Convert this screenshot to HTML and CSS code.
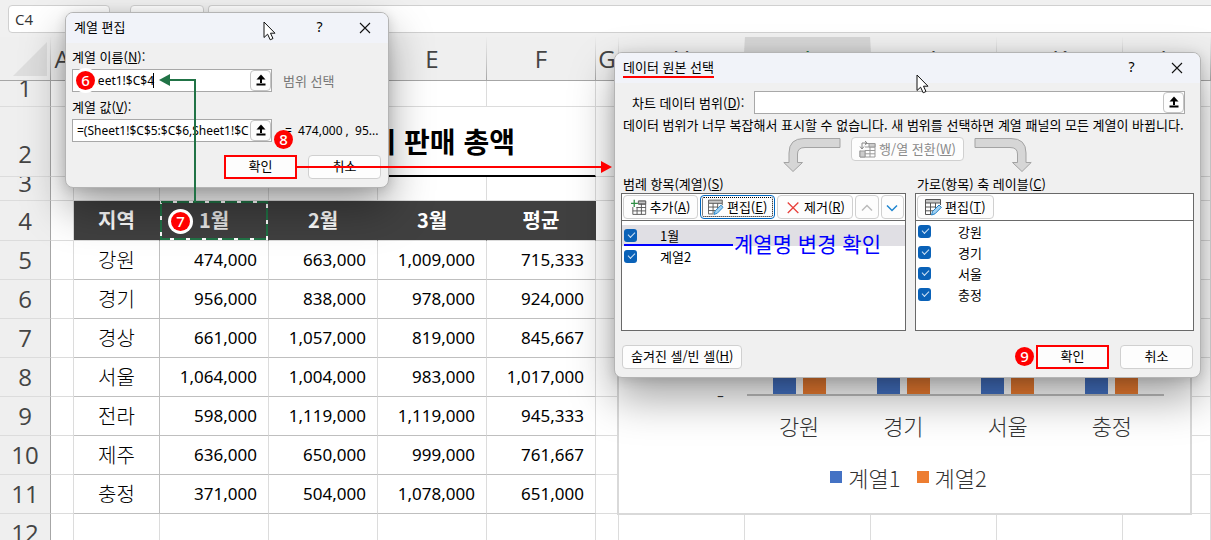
FILE: index.html
```html
<!DOCTYPE html>
<html lang="ko">
<head>
    <meta charset="UTF-8">
    <meta name="viewport" content="width=device-width, initial-scale=1.0">
    <title>데이터 원본 선택</title>
    <link rel="stylesheet" href="styles.css">
</head>
<body>
    <!-- Shared icons -->
    <svg class="defs" aria-hidden="true">
        <symbol id="i-up" viewBox="0 0 12 12">
            <path d="M6 0.5 L10.5 5.5 H1.5 Z" fill="#000"/>
            <path d="M6 3 V9 M1.5 10.5 H10.5" stroke="#000" stroke-width="2" fill="none"/>
        </symbol>
        <symbol id="i-close" viewBox="0 0 12 12">
            <path d="M1 1 L11 11 M11 1 L1 11" stroke="#111" stroke-width="1.1" fill="none"/>
        </symbol>
        <symbol id="i-cursor" viewBox="0 0 13 20">
            <path d="M1 1 V16.5 L4.6 13.2 L7.2 18.8 L10 17.5 L7.5 12.2 H12 Z" fill="#fff" stroke="#111" stroke-width="1"/>
        </symbol>
        <symbol id="i-add" viewBox="0 0 17 17">
            <path d="M8 1.5 H16 V16 H2 V8 M8 5 H16 M6 8.5 H16 M2 12.2 H16 M6.6 8 V16 M11.3 1.5 V16" stroke="#555" stroke-width="1" fill="none"/>
            <path d="M8 1.5 H16 V4.5 H8 Z" fill="#c4c4c4" stroke="#555"/>
            <path d="M3.5 0 V8 M0 4 H7.5" stroke="#2f8f46" stroke-width="1.4" fill="none"/>
        </symbol>
        <symbol id="i-edit" viewBox="0 0 17 17">
            <path d="M0.5 0.5 H15.5 V4 H0.5 Z" fill="#c4c4c4" stroke="#555"/>
            <path d="M0.5 4 V15.5 H6 M0.5 8 H11 M0.5 11.8 H8 M5.5 4 V15 M10.5 4 V9 M15.5 4 V6" stroke="#555" fill="none"/>
            <path d="M6.5 16 L7.6 12.4 L14 6 L16.4 8.3 L10 14.8 Z" fill="#9fd0f2" stroke="#1f7fc4"/>
        </symbol>
        <symbol id="i-remove" viewBox="0 0 17 17">
            <path d="M3 3 L14.5 14.5 M14.5 3 L3 14.5" stroke="#e8413c" stroke-width="1.4" fill="none"/>
        </symbol>
        <symbol id="i-switch" viewBox="0 0 17 17">
            <path d="M6 2.5 H16 V16 H1 V9.5 M6 6 H16 M6 9.5 H16 M1 12.8 H16 M6 9.5 V16 M11 2.5 V16" stroke="#999" fill="none"/>
            <path d="M10 2.5 H16 V6 H10 Z M1 10 H6 V16 H1 Z" fill="#ccc" stroke="#999"/>
            <path d="M8 2 H3 V7.5 M1 5.5 L3 8 L5 5.5 M6 0 L8.2 2 L6 4.2" stroke="#888" fill="none"/>
        </symbol>
        <symbol id="i-bend" viewBox="0 0 58 36">
            <path d="M57 1.5 H21 Q6 1.5 6 16 V25.5 H0.8 L10 34.5 L19.5 25.5 H14.5 V17 Q14.5 10.5 22 10.5 H57 Z" fill="#d6d6d6" stroke="#a3a3a3"/>
        </symbol>
    </svg>

    <div class="app">
        <div class="formula-bar">
            <input class="name-box" aria-label="이름 상자" value="C4">
            <div class="fx-box"></div>
            <input class="formula-input" aria-label="수식 입력줄">
        </div>

        <table class="sheet">
            <colgroup>
                <col class="c-row"><col class="c-narrow"><col class="c-name">
                <col class="c-num"><col class="c-num"><col class="c-num"><col class="c-num">
                <col class="c-narrow"><col class="c-wide"><col class="c-wide"><col class="c-wide"><col class="c-wide"><col>
            </colgroup>
            <thead>
                <tr class="letters">
                    <th class="corner"><svg viewBox="0 0 34 34"><path d="M34 0 V34 H0 Z"/></svg></th>
                    <th>A</th><th>B</th><th>C</th><th>D</th><th>E</th><th>F</th><th>G</th>
                    <th>H</th><th class="active">I</th><th>J</th><th>K</th><th>L</th>
                </tr>
            </thead>
            <tbody>
                <tr class="r1"><th>1</th><td></td><td></td><td></td><td></td><td></td><td></td><td></td><td></td><td></td><td></td><td></td><td></td></tr>
                <tr class="r2"><th>2</th><td></td><td class="sheet-title" colspan="5">지역별 1분기 판매 총액</td><td></td><td></td><td></td><td></td><td></td><td></td></tr>
                <tr class="r3"><th>3</th><td></td><td></td><td></td><td></td><td></td><td></td><td></td><td></td><td></td><td></td><td></td><td></td></tr>
                <tr class="head"><th>4</th><td></td><td class="h">지역</td>
                    <td class="h selected">1월<svg class="ants" aria-hidden="true"><rect class="ants-base" x="1" y="1"/><rect class="ants-dash" x="1" y="1"/></svg></td>
                    <td class="h">2월</td><td class="h">3월</td><td class="h">평균</td><td></td><td></td><td></td><td></td><td></td><td></td></tr>
                <tr class="data"><th>5</th><td></td><td class="n">강원</td><td class="v">474,000</td><td class="v">663,000</td><td class="v">1,009,000</td><td class="v">715,333</td><td></td><td></td><td></td><td></td><td></td><td></td></tr>
                <tr class="data"><th>6</th><td></td><td class="n">경기</td><td class="v">956,000</td><td class="v">838,000</td><td class="v">978,000</td><td class="v">924,000</td><td></td><td></td><td></td><td></td><td></td><td></td></tr>
                <tr class="data"><th>7</th><td></td><td class="n">경상</td><td class="v">661,000</td><td class="v">1,057,000</td><td class="v">819,000</td><td class="v">845,667</td><td></td><td></td><td></td><td></td><td></td><td></td></tr>
                <tr class="data"><th>8</th><td></td><td class="n">서울</td><td class="v">1,064,000</td><td class="v">1,004,000</td><td class="v">983,000</td><td class="v">1,017,000</td><td></td><td></td><td></td><td></td><td></td><td></td></tr>
                <tr class="data"><th>9</th><td></td><td class="n">전라</td><td class="v">598,000</td><td class="v">1,119,000</td><td class="v">1,119,000</td><td class="v">945,333</td><td></td><td></td><td></td><td></td><td></td><td></td></tr>
                <tr class="data"><th>10</th><td></td><td class="n">제주</td><td class="v">636,000</td><td class="v">650,000</td><td class="v">999,000</td><td class="v">761,667</td><td></td><td></td><td></td><td></td><td></td><td></td></tr>
                <tr class="data"><th>11</th><td></td><td class="n">충정</td><td class="v">371,000</td><td class="v">504,000</td><td class="v">1,078,000</td><td class="v">651,000</td><td></td><td></td><td></td><td></td><td></td><td></td></tr>
                <tr class="data"><th>12</th><td></td><td></td><td></td><td></td><td></td><td></td><td></td><td></td><td></td><td></td><td></td><td></td></tr>
            </tbody>
        </table>

        <!-- Chart floating over the sheet -->
        <div class="chart">
            <div class="plot-row">
                <span class="axis-value">-</span>
                <div class="plot">
                    <div class="group"><i class="bar s1"></i><i class="bar s2"></i></div>
                    <div class="group"><i class="bar s1"></i><i class="bar s2"></i></div>
                    <div class="group"><i class="bar s1"></i><i class="bar s2"></i></div>
                    <div class="group"><i class="bar s1"></i><i class="bar s2"></i></div>
                </div>
            </div>
            <div class="categories"><span>강원</span><span>경기</span><span>서울</span><span>충정</span></div>
            <div class="legend">
                <span class="key"><i class="swatch s1"></i>계열1</span>
                <span class="key"><i class="swatch s2"></i>계열2</span>
            </div>
        </div>

        <!-- Edit series dialog -->
        <form class="dialog edit-dialog">
            <div class="title-bar">
                <h2>계열 편집</h2>
                <button type="button" class="win-button">?</button>
                <button type="button" class="win-button" aria-label="닫기"><svg class="close-icon"><use href="#i-close"/></svg></button>
            </div>
            <div class="edit-body">
                <label for="series-name">계열 이름(<u>N</u>):</label>
                <div class="field-row">
                    <div class="ref-box">
                        <input id="series-name" value="=Sheet1!$C$4">
                        <button type="button" class="pick" aria-label="범위 선택"><svg><use href="#i-up"/></svg></button>
                    </div>
                    <span class="hint">범위 선택</span>
                </div>
                <label for="series-values">계열 값(<u>V</u>):</label>
                <div class="field-row">
                    <div class="ref-box">
                        <input id="series-values" value="=(Sheet1!$C$5:$C$6,Sheet1!$C">
                        <button type="button" class="pick" aria-label="범위 선택"><svg><use href="#i-up"/></svg></button>
                    </div>
                    <span class="preview">= &nbsp;474,000 , &nbsp;95...</span>
                </div>
                <div class="actions">
                    <button type="button" class="btn primary">확인</button>
                    <button type="button" class="btn">취소</button>
                </div>
            </div>
        </form>

        <!-- Select data source dialog -->
        <form class="dialog source-dialog">
            <div class="title-bar">
                <h2><span class="marked">데이터 원본 선택</span></h2>
                <button type="button" class="win-button">?</button>
                <button type="button" class="win-button" aria-label="닫기"><svg class="close-icon"><use href="#i-close"/></svg></button>
            </div>
            <div class="source-body">
                <div class="range-row">
                    <label for="range">차트 데이터 범위(<u>D</u>):</label>
                    <div class="ref-box">
                        <input id="range">
                        <button type="button" class="pick" aria-label="범위 선택"><svg><use href="#i-up"/></svg></button>
                    </div>
                </div>
                <p class="message">데이터 범위가 너무 복잡해서 표시할 수 없습니다. 새 범위를 선택하면 계열 패널의 모든 계열이 바뀝니다.</p>
                <div class="switch-row">
                    <svg class="bend"><use href="#i-bend"/></svg>
                    <button type="button" class="btn tool" disabled><svg><use href="#i-switch"/></svg><span>행/열 전환(<u>W</u>)</span></button>
                    <svg class="bend flip"><use href="#i-bend"/></svg>
                </div>
                <div class="panels">
                    <div class="panel-col">
                        <h3>범례 항목(계열)(<u>S</u>)</h3>
                        <div class="panel">
                            <div class="toolbar">
                                <button type="button" class="btn tool"><svg><use href="#i-add"/></svg><span>추가(<u>A</u>)</span></button>
                                <button type="button" class="btn tool focused"><svg><use href="#i-edit"/></svg><span>편집(<u>E</u>)</span></button>
                                <button type="button" class="btn tool"><svg><use href="#i-remove"/></svg><span>제거(<u>R</u>)</span></button>
                                <button type="button" class="btn arrow off" aria-label="위로"><svg viewBox="0 0 12 8"><path d="M1 6.5 L6 1.5 L11 6.5"/></svg></button>
                                <button type="button" class="btn arrow" aria-label="아래로"><svg viewBox="0 0 12 8"><path d="M1 1.5 L6 6.5 L11 1.5"/></svg></button>
                            </div>
                            <div class="items series">
                                <label class="item current"><input type="checkbox" checked>1월</label>
                                <label class="item"><input type="checkbox" checked>계열2</label>
                            </div>
                        </div>
                    </div>
                    <div class="panel-col">
                        <h3>가로(항목) 축 레이블(<u>C</u>)</h3>
                        <div class="panel">
                            <div class="toolbar">
                                <button type="button" class="btn tool"><svg><use href="#i-edit"/></svg><span>편집(<u>T</u>)</span></button>
                            </div>
                            <div class="items axis">
                                <label class="item"><input type="checkbox" checked>강원</label>
                                <label class="item"><input type="checkbox" checked>경기</label>
                                <label class="item"><input type="checkbox" checked>서울</label>
                                <label class="item"><input type="checkbox" checked>충정</label>
                            </div>
                        </div>
                    </div>
                </div>
                <div class="actions">
                    <button type="button" class="btn hidden-cells">숨겨진 셀/빈 셀(<u>H</u>)</button>
                    <button type="button" class="btn primary">확인</button>
                    <button type="button" class="btn">취소</button>
                </div>
            </div>
        </form>

        <!-- Step marks drawn over the windows -->
        <svg class="marks" aria-hidden="true">
            <path d="M168 80 H195 V202" stroke="#217346" stroke-width="2" fill="none"/>
            <path d="M159 80 L170 74 V86 Z" fill="#217346"/>
            <path d="M297 167 H603" stroke="#f00" stroke-width="2"/>
            <path d="M612 167 L601 161 V173 Z" fill="#f00"/>
            <path d="M624 245 H733" stroke="#00f" stroke-width="2"/>
            <path d="M153.5 73 V88" stroke="#000"/>
        </svg>
        <span class="step step-6">6</span>
        <span class="step step-7">7</span>
        <span class="step step-8">8</span>
        <span class="step step-9">9</span>
        <span class="note">계열명 변경 확인</span>
        <svg class="cursor cursor-edit" aria-hidden="true"><use href="#i-cursor"/></svg>
        <svg class="cursor cursor-source" aria-hidden="true"><use href="#i-cursor"/></svg>
    </div>
</body>
</html>
```

FILE: styles.css
```css
* {
    box-sizing: border-box;
}
body {
    margin: 0;
    font-family: "Noto Sans CJK KR", "Noto Sans", sans-serif;
    font-size: 13px;
    line-height: 18px;
    color: #000;
    background-color: #f0f0f0;
}
button,
input {
    font: inherit;
    color: inherit;
}
.defs {
    display: none;
}
.app {
    position: relative;
    height: 100vh;
    overflow: hidden;
}

/* Formula bar */
.formula-bar {
    display: flex;
    height: 37px;
    padding: 5px 0 4px 8px;
}
.name-box,
.fx-box,
.formula-input {
    height: 28px;
    background-color: #fff;
    border: 1px solid #d0d0d0;
    border-radius: 4px;
}
.name-box {
    width: 102px;
    padding: 0 6px;
    font-family: "Open Sans", sans-serif;
    font-size: 15px;
    color: #333;
}
.fx-box {
    width: 74px;
    margin: 0 4px 0 20px;
}
.formula-input {
    flex: 1;
    min-width: 0;
    border-right: 0;
    border-radius: 4px 0 0 4px;
}

/* Sheet */
.sheet {
    width: 100%;
    table-layout: fixed;
    border-collapse: separate;
    border-spacing: 0;
    background-color: #fff;
}
.c-row { width: 51px; }
.c-narrow { width: 23px; }
.c-name { width: 86px; }
.c-num { width: 109px; }
.c-wide { width: 126px; }
.sheet th,
.sheet td {
    padding: 0;
    border-right: 1px solid #dcdcdc;
    border-bottom: 1px solid #dcdcdc;
    overflow: hidden;
    white-space: nowrap;
}
.sheet th {
    font-family: "Open Sans", sans-serif;
    font-size: 24px;
    font-weight: 400;
    line-height: 24px;
    color: #444;
    background-color: #efefef;
    border-right-color: #a6a6a6;
}
.letters { height: 44px; }
.sheet .letters th {
    border-right: 1px solid;
    border-bottom: 1px solid #a6a6a6;
    border-image: linear-gradient(#efefef, #c8c8c8 60%, #a6a6a6 98%) 1;
}
.sheet .letters .active {
    color: #217346;
    background-color: #d6d6d6;
}
.sheet .letters .corner {
    padding-right: 3px;
    text-align: right;
}
.corner svg {
    width: 34px;
    height: 34px;
    vertical-align: middle;
    fill: #dedede;
}
.r1 { height: 26px; }
.r2 { height: 70px; }
.r3 { height: 24px; }
.head { height: 40px; }
.data { height: 39px; }
.sheet .r1 th,
.sheet .r3 th {
    padding-bottom: 11px;
    line-height: 12px;
}
.sheet .r2 th {
    padding-top: 24px;
}
.sheet .sheet-title {
    padding-right: 80px;
    font-size: 28px;
    font-weight: 700;
    line-height: 36px;
    text-align: right;
    border-bottom: 2px solid #000;
}
.sheet .h {
    position: relative;
    padding-bottom: 2px;
    font-size: 20px;
    font-weight: 700;
    line-height: 30px;
    text-align: center;
    color: #fff;
    background-color: #404040;
    border-right-color: #404040;
}
.sheet .selected {
    color: #e8e8e8;
}
.ants {
    position: absolute;
    left: 0;
    top: 0;
    width: 100%;
    height: 100%;
}
.ants rect {
    width: calc(100% - 2px);
    height: calc(100% - 2px);
    fill: none;
    stroke-width: 2px;
}
.ants .ants-base {
    stroke: #fff;
}
.ants .ants-dash {
    stroke: #217346;
    stroke-dasharray: 12 4;
}
.sheet .n {
    font-size: 20px;
    font-weight: 300;
    line-height: 30px;
    text-align: center;
    border-right-color: #bfbfbf;
    border-bottom-color: #bfbfbf;
}
.sheet .v {
    padding-right: 11px;
    font-family: "Noto Sans", sans-serif;
    font-size: 17px;
    text-align: right;
    border-bottom-color: #bfbfbf;
}

/* Chart */
.chart {
    position: absolute;
    left: 617px;
    right: 19px;
    top: 230px;
    height: 285px;
    display: flex;
    flex-direction: column;
    justify-content: flex-end;
    padding-bottom: 20px;
    font-size: 22px;
    font-weight: 300;
    line-height: 32px;
    color: #333;
    background-color: #fff;
    border: 2px solid #d9d9d9;
}
.plot-row {
    display: flex;
    align-items: flex-end;
    padding-right: 26px;
}
.axis-value {
    width: 128px;
    padding-right: 23px;
    line-height: 1px;
    text-align: right;
}
.plot {
    flex: 1;
    display: flex;
    border-bottom: 2px solid #bfbfbf;
}
.group {
    flex: 1;
    display: flex;
    justify-content: center;
    gap: 7px;
}
.bar {
    width: 23px;
    height: 90px;
}
.s1 { background-color: #4472c4; }
.s2 { background-color: #ed7d31; }
.categories {
    display: flex;
    padding: 13px 26px 0 128px;
}
.categories span {
    flex: 1;
    text-align: center;
}
.legend {
    display: flex;
    justify-content: center;
    gap: 16px;
    padding: 20px 0 0 8px;
}
.key {
    display: flex;
    align-items: center;
    gap: 6px;
}
.swatch {
    width: 12px;
    height: 12px;
}

/* Dialogs */
.dialog {
    position: absolute;
    background-color: #f0f0f0;
    border: 1px solid #b4b4b4;
    border-radius: 8px;
    box-shadow: 0 20px 44px rgba(0, 0, 0, 0.36), 0 2px 12px rgba(0, 0, 0, 0.14);
}
.title-bar {
    display: flex;
    align-items: center;
    height: 30px;
    padding: 0 1px 3px 8px;
    background-color: #f1f3f9;
    border-radius: 7px 7px 0 0;
}
.title-bar h2 {
    flex: 1;
    margin: 0;
    font-size: 13px;
    font-weight: 400;
}
.marked {
    display: inline-block;
    margin-top: 3px;
    border-bottom: 2px solid #f00;
}
.win-button {
    width: 45px;
    padding: 0;
    font-family: "Noto Sans", sans-serif;
    font-size: 14px;
    background: none;
    border: 0;
}
.close-icon {
    width: 12px;
    height: 12px;
    vertical-align: middle;
}
.btn {
    height: 24px;
    min-width: 73px;
    padding: 0 8px 2px;
    background-color: #fdfdfd;
    border: 1px solid #d0d0d0;
    border-radius: 4px;
    line-height: 18px;
    white-space: nowrap;
}
.primary {
    border: 2px solid #f00;
    border-radius: 0;
}
.ref-box {
    display: flex;
    height: 23px;
    background-color: #fff;
    border: 1px solid #a8a8a8;
}
.ref-box input {
    flex: 1;
    min-width: 0;
    padding: 0 0 0 4px;
    font-family: "Noto Sans", sans-serif;
    font-size: 12px;
    background: none;
    border: 0;
    outline: 0;
}
.pick {
    width: 21px;
    padding: 0 0 2px;
    line-height: 12px;
    background-color: #fdfdfd;
    border: 1px solid #c4c4c4;
    border-radius: 4px;
}
.pick svg {
    width: 12px;
    height: 12px;
    vertical-align: middle;
}
.actions {
    display: flex;
    justify-content: flex-end;
    gap: 11px;
    padding-right: 1px;
}

/* Edit series */
.edit-dialog {
    left: 65px;
    top: 12px;
    width: 324px;
}
.edit-body {
    padding: 5px 6px 8px;
}
.edit-body label {
    display: block;
    height: 21px;
}
.field-row {
    display: flex;
    align-items: center;
    height: 23px;
    margin-bottom: 6px;
}
.edit-body .ref-box {
    width: 200px;
}
.hint {
    margin-left: 11px;
    color: #777;
}
.preview {
    margin-left: 13px;
    font-family: "Noto Sans", sans-serif;
    font-size: 12px;
}
.edit-body .actions {
    padding-top: 7px;
}

/* Select data source */
.source-dialog {
    left: 614px;
    right: 10px;
    top: 52px;
}
.source-body {
    padding: 8px 6px;
}
.range-row {
    display: flex;
    align-items: center;
    gap: 10px;
    padding: 0 9px 0 11px;
}
.range-row .ref-box {
    flex: 1;
}
.message {
    margin: 2px 2px 3px;
    white-space: nowrap;
}
.switch-row {
    display: flex;
    justify-content: center;
    gap: 10px;
    height: 38px;
}
.bend {
    width: 58px;
    height: 36px;
}
.flip {
    transform: scaleX(-1);
}
.tool {
    display: flex;
    align-items: center;
    gap: 3px;
    padding: 0 7px;
}
.tool svg {
    width: 17px;
    height: 17px;
}
.tool:disabled {
    color: #8a8a8a;
}
.panels {
    display: flex;
    gap: 9px;
}
.panel-col {
    flex: 285;
    min-width: 0;
}
.panel-col + .panel-col {
    flex: 279;
}
.panel-col h3 {
    margin: 0 0 0 2px;
    font-size: 13px;
    font-weight: 400;
}
.panel {
    height: 138px;
    background-color: #fff;
    border: 1px solid #696969;
}
.toolbar {
    display: flex;
    gap: 2px;
    height: 27px;
    padding: 1px;
    border-bottom: 1px solid #696969;
}
.focused {
    border: 1px solid #0067c0;
    outline: 1px dotted #000;
    outline-offset: -3px;
}
.arrow {
    width: 24px;
    min-width: 0;
    padding: 0;
}
.arrow svg {
    width: 12px;
    height: 8px;
    fill: none;
    stroke: #1f86d0;
    stroke-width: 1.5px;
}
.off svg {
    stroke: #bbb;
}
.series {
    padding-top: 4px;
}
.item {
    display: flex;
    align-items: center;
    height: 21px;
    padding-left: 2px;
}
.current {
    background-color: #e0dfe4;
}
.item input {
    appearance: none;
    position: relative;
    width: 13px;
    height: 13px;
    margin: 0 23px 0 0;
    background-color: #0a62b8;
    border-radius: 3px;
}
.axis .item input {
    margin-right: 27px;
}
.item input::after {
    content: "";
    position: absolute;
    left: 4px;
    top: 3px;
    width: 6px;
    height: 3px;
    border: solid #cfe2f5;
    border-width: 0 0 1px 1px;
    transform: rotate(-45deg);
}
.source-body .actions {
    padding-top: 14px;
}
.hidden-cells {
    margin: 0 auto 0 1px;
}

/* Step marks */
.marks {
    position: absolute;
    left: 0;
    top: 0;
    width: 100%;
    height: 100%;
    pointer-events: none;
}
.step {
    position: absolute;
    width: 19px;
    height: 19px;
    border-radius: 50%;
    font-family: "Noto Sans", sans-serif;
    font-size: 15px;
    font-weight: 500;
    line-height: 19px;
    text-align: center;
    color: #fff;
    background-color: #f00;
}
.step-6 {
    left: 76px;
    top: 71px;
    box-shadow: 0 0 0 3px #fff;
}
.step-7 {
    left: 171px;
    top: 212px;
    box-shadow: 0 0 0 3px #fff;
}
.step-8 {
    left: 274px;
    top: 130px;
}
.step-9 {
    left: 1015px;
    top: 347px;
}
.note {
    position: absolute;
    left: 734px;
    top: 229px;
    font-size: 21px;
    line-height: 28px;
    color: #00f;
}
.cursor {
    position: absolute;
    width: 13px;
    height: 20px;
}
.cursor-edit {
    left: 263px;
    top: 21px;
}
.cursor-source {
    left: 916px;
    top: 74px;
}
```
